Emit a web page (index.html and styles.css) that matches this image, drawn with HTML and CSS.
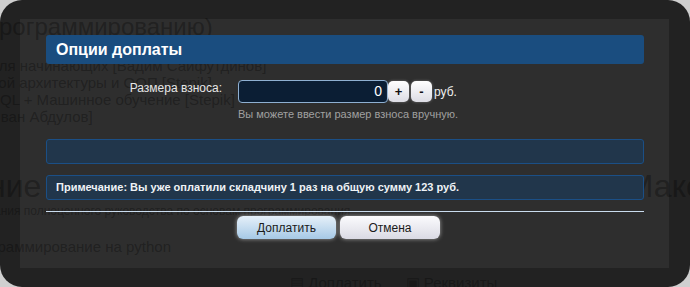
FILE: index.html
```html
<!DOCTYPE html>
<html lang="ru">
<head>
<meta charset="utf-8">
<title>Опции доплаты</title>
<link rel="stylesheet" href="styles.css">
</head>
<body>
<div class="frame">
  <div class="bgpage" aria-hidden="true">
    <div class="bg-title">программированию)</div>
    <div class="bg-list">
      <div>для начинающих [Вадим Сайфутдинов]</div>
      <div>ной архитектуры и ООП [Stepik]</div>
      <div>SQL + Машинное обучение [Stepik]</div>
      <div>Иван Абдулов]</div>
    </div>
    <div class="bg-big">
      <span>ние</span>
      <span>Макс</span>
    </div>
    <div class="bg-small">ания полноценного руководства по основам программирования</div>
    <div class="bg-list2">граммирование на python</div>
    <div class="bg-bottom"><span>&#9636; Доплатить</span><span>&#9635; Реквизиты</span></div>
  </div>
  <div class="panel">
    <div class="modal">
      <div class="header">Опции доплаты</div>
      <div class="row">
        <div class="label">Размера взноса:</div>
        <div class="field">
          <div class="controls">
            <div class="amount">0</div>
            <button class="step">+</button>
            <button class="step">-</button>
            <span class="cur">руб.</span>
          </div>
          <div class="hint">Вы можете ввести размер взноса вручную.</div>
        </div>
      </div>
      <div class="box empty"></div>
      <div class="box note">Примечание: Вы уже оплатили складчину 1 раз на общую сумму 123 руб.</div>
      <div class="rule"></div>
      <div class="actions">
        <button class="btn primary">Доплатить</button>
        <button class="btn">Отмена</button>
      </div>
    </div>
  </div>
</div>
</body>
</html>
```
FILE: styles.css
```css
html, body {
  margin: 0;
  padding: 0;
}
body {
  background: #cfcfcf;
  font-family: "Liberation Sans", Arial, sans-serif;
  width: 690px;
  height: 287px;
  overflow: hidden;
}
.frame {
  position: relative;
  width: 690px;
  height: 287px;
  box-sizing: border-box;
  padding: 19px 21px 19px 20px;
  background: #222222;
  border-radius: 22px;
  overflow: hidden;
}
.bgpage {
  position: absolute;
  inset: 0;
  z-index: 1;
  color: rgba(0, 0, 0, 0.3);
  pointer-events: none;
}
.bg-title {
  font-size: 24px;
  line-height: 28px;
  margin: 13px 0 0 -14px;
}
.bg-list {
  font-size: 15px;
  line-height: 17px;
  margin: 16px 0 0 -10px;
}
.bg-big {
  display: flex;
  justify-content: space-between;
  font-size: 32px;
  line-height: 36px;
  margin: 43px -12px 0 -12px;
}
.bg-small {
  font-size: 12px;
  line-height: 14px;
  margin: 0 0 0 -6px;
}
.bg-list2 {
  font-size: 15px;
  line-height: 18px;
  margin: 20px 0 0 -8px;
}
.bg-bottom {
  display: flex;
  gap: 24px;
  font-size: 15px;
  line-height: 18px;
  margin: 18px 0 0 290px;
}
.panel {
  height: 100%;
  background: #2e2e2e;
  box-sizing: border-box;
  padding: 16px 25px 0 26px;
}
.modal {
  position: relative;
  z-index: 2;
}
.header {
  height: 29px;
  background: #1a4d7f;
  border-radius: 3px;
  padding-left: 10px;
  display: flex;
  align-items: center;
  color: #ffffff;
  font-weight: bold;
  font-size: 16px;
}
.row {
  display: grid;
  grid-template-columns: 176px auto;
  column-gap: 16px;
  margin-top: 16px;
  align-items: start;
}
.label {
  text-align: right;
  color: #e6e6e6;
  font-size: 12px;
  line-height: 16px;
}
.controls {
  display: flex;
  align-items: center;
  gap: 2px;
}
.amount {
  width: 150px;
  height: 23px;
  box-sizing: border-box;
  border: 1px solid #8fb0d2;
  border-radius: 4px;
  background: #0b1e34;
  color: #ffffff;
  font-size: 14px;
  line-height: 21px;
  text-align: right;
  padding-right: 5px;
  margin-right: -2px;
}
.step {
  width: 21px;
  height: 21px;
  padding: 0;
  border: none;
  border-radius: 5px;
  background: linear-gradient(#ffffff, #dcdce4);
  box-shadow: 0 0 3px rgba(255, 255, 255, 0.35);
  color: #111;
  font-family: "Liberation Sans", Arial, sans-serif;
  font-weight: bold;
  font-size: 13px;
  line-height: 21px;
}
.cur {
  margin-left: 0;
  color: #f0f0f0;
  font-size: 12px;
}
.hint {
  margin-top: 4px;
  color: #a0a0a0;
  font-size: 11px;
  line-height: 14px;
}
.box {
  box-sizing: border-box;
  height: 25px;
  border: 1px solid #1b4f86;
  border-radius: 3px;
  background: #21364b;
}
.empty {
  margin-top: 18px;
}
.note {
  margin-top: 11px;
  padding-left: 9px;
  color: #eef2f6;
  font-weight: bold;
  font-size: 11px;
  line-height: 23px;
}
.rule {
  height: 1px;
  margin-top: 11px;
  background: #cadcee;
}
.actions {
  display: flex;
  gap: 4px;
  margin-top: 4px;
  padding-left: 191px;
}
.btn {
  width: 100px;
  height: 23px;
  border: none;
  border-radius: 6px;
  background: linear-gradient(#fbfbfd, #dadae4);
  box-shadow: 0 0 4px rgba(255, 255, 255, 0.55);
  color: #1a1a1a;
  font-family: "Liberation Sans", Arial, sans-serif;
  font-size: 12px;
  padding: 0;
}
.btn.primary {
  width: 99px;
  background: linear-gradient(#e6f0f9, #a6c9e6);
}
```
